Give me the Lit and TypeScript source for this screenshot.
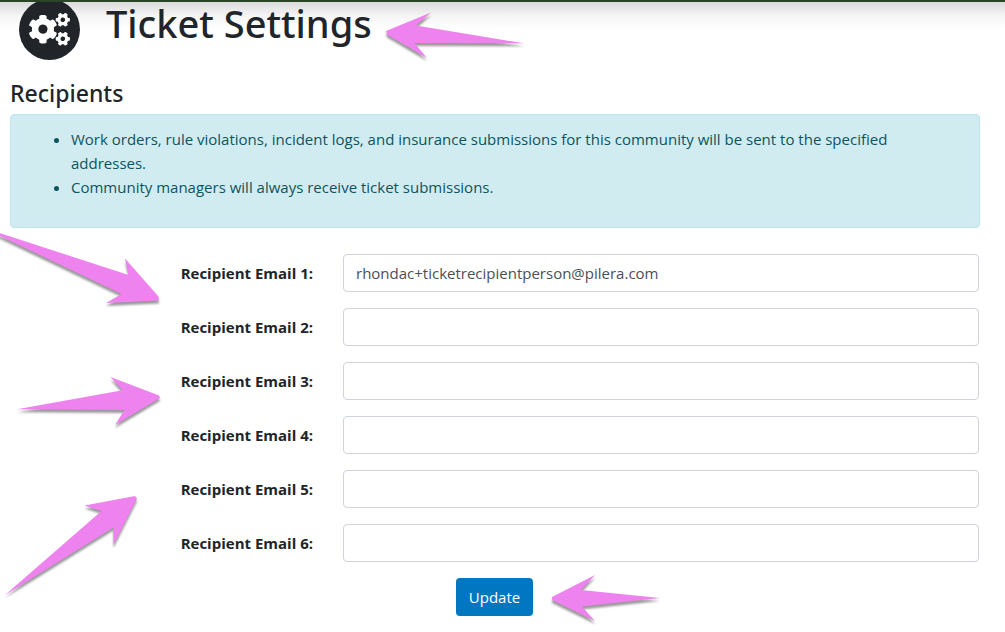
import { LitElement, html, css, svg } from "lit";
import { customElement, state } from "lit/decorators.js";

const SMALL_COG =
  "M512.1 191l-8.2 14.3c-3 5.3-9.4 7.5-15.1 5.4-11.8-4.4-22.6-10.7-32.1-18.6-4.6-3.8-5.8-10.5-2.8-15.7l8.2-14.3c-6.9-8-12.3-17.3-15.9-27.4h-16.5c-6 0-11.2-4.3-12.2-10.3-2-12-2.1-24.6 0-37.1 1-6 6.2-10.4 12.2-10.4h16.5c3.6-10.1 9-19.4 15.9-27.4l-8.2-14.3c-3-5.2-1.9-11.9 2.8-15.7 9.5-7.9 20.4-14.2 32.1-18.6 5.7-2.1 12.1.1 15.1 5.4l8.2 14.3c10.5-1.9 21.2-1.9 31.7 0L552 6.3c3-5.3 9.4-7.5 15.1-5.4 11.8 4.4 22.6 10.7 32.1 18.6 4.6 3.8 5.8 10.5 2.8 15.7l-8.2 14.3c6.9 8 12.3 17.3 15.9 27.4h16.5c6 0 11.2 4.3 12.2 10.3 2 12 2.1 24.6 0 37.1-1 6-6.2 10.4-12.2 10.4h-16.5c-3.6 10.1-9 19.4-15.9 27.4l8.2 14.3c3 5.2 1.9 11.9-2.8 15.7-9.5 7.9-20.4 14.2-32.1 18.6-5.7 2.1-12.1-.1-15.1-5.4l-8.2-14.3c-10.4 1.9-21.2 1.9-31.7 0zm-10.5-58.8c38.5 29.6 82.4-14.3 52.8-52.8-38.5-29.7-82.4 14.3-52.8 52.8z";
const LARGE_COG =
  "M386.3 286.1l33.7 16.8c10.1 5.8 14.5 18.1 10.5 29.1-8.9 24.2-26.4 46.4-42.6 65.8-7.4 8.9-20.2 11.1-30.3 5.3l-29.1-16.8c-16 13.7-34.6 24.6-54.9 31.7v33.6c0 11.6-8.3 21.6-19.7 23.6-24.6 4.2-50.4 4.4-75.9 0-11.5-2-20-11.9-20-23.6V418c-20.3-7.2-38.9-18-54.9-31.7L74 403c-10 5.8-22.9 3.6-30.3-5.3-16.2-19.4-33.3-41.6-42.2-65.7-4-10.9.4-23.2 10.5-29.1l33.3-16.8c-3.9-20.9-3.9-42.4 0-63.4L12 205.8c-10.1-5.8-14.6-18.1-10.5-29 8.9-24.2 26-46.4 42.2-65.8 7.4-8.9 20.2-11.1 30.3-5.3l29.1 16.8c16-13.7 34.6-24.6 54.9-31.7V57.1c0-11.5 8.2-21.5 19.6-23.5 24.6-4.2 50.5-4.4 76-.1 11.5 2 20 11.9 20 23.6v33.6c20.3 7.2 38.9 18 54.9 31.7l29.1-16.8c10-5.8 22.9-3.6 30.3 5.3 16.2 19.4 33.2 41.6 42.1 65.8 4 10.9.1 23.2-10 29.1l-33.7 16.8c3.9 21 3.9 42.5 0 63.5zm-117.6 21.1c59.2-77-28.7-164.9-105.7-105.7-59.2 77 28.7 164.9 105.7 105.7z";

// Callout arrows drawn over the page, as outlines in page coordinates.
const ARROWS = [
  "M386 31L431 12.5L416 25.5L524 43.3L414.5 43L427 58L387 34.5Z",
  "M-2 232.5L128.5 275L125 258.5L158.5 296.5L159 300.5L106 303L121.5 294L-2 235Z",
  "M17 409.3L122.5 390.3L110.5 377L159 395.5L160 398L115 425L124.5 410Z",
  "M5 595L101.5 511L84.5 505.5L135 496L137 498.5L113.5 545L113.5 527.5Z",
  "M552 597L595 575L581 590L660 598L582 606.5L595 621L552 600Z",
];

@customElement("app-root")
export class AppRoot extends LitElement {
  static styles = css`
    :host {
      display: block;
      position: relative;
      background: #fff;
      color: #212529;
      font: 400 16px/24px "Segoe UI", "Open Sans", "Noto Sans", sans-serif;
    }
    .topbar {
      height: 2px;
      background: #2b4529;
    }
    .page {
      padding: 0 25px 16px 10px;
      background: linear-gradient(rgba(0, 0, 0, 0.14), rgba(0, 0, 0, 0.04) 14px, transparent 27px);
    }
    .title {
      display: flex;
      align-items: flex-start;
      gap: 26px;
      padding: 0 0 19px 9px;
    }
    .badge {
      display: block;
      flex: none;
      width: 61px;
      height: 58px;
    }
    h1,
    h2 {
      font-family: "Segoe UI", "Noto Sans", "Open Sans", sans-serif;
      font-weight: 500;
    }
    h1 {
      margin: 0;
      font-size: 38px;
      line-height: 42px;
    }
    h2 {
      margin: 0 0 7px;
      font-size: 23px;
      line-height: 28px;
    }
    .notice {
      padding: 12px 20px;
      border: 1px solid #bee5eb;
      border-radius: 4px;
      background: #d1ecf1;
      color: #0c5460;
      font-size: 15px;
    }
    .notice ul {
      margin: 0 0 16px;
      padding-left: 40px;
    }
    form {
      display: flex;
      flex-direction: column;
      gap: 16px;
      margin-top: 26px;
      padding-right: 1px;
    }
    .field {
      display: grid;
      grid-template-columns: 303fr 636fr;
      gap: 30px;
      align-items: center;
    }
    label {
      text-align: right;
      font-size: 15px;
      font-weight: 700;
    }
    input {
      box-sizing: border-box;
      width: 100%;
      height: 38px;
      padding: 6px 12px;
      border: 1px solid #ced4da;
      border-radius: 4px;
      background: #fff;
      color: #495057;
      font: inherit;
      font-size: 15px;
    }
    button {
      align-self: center;
      height: 38px;
      padding: 0 13px;
      border: 0;
      border-radius: 4px;
      background: #0077c0;
      color: #fff;
      font: inherit;
      font-size: 15px;
      cursor: pointer;
    }
    .arrows {
      position: absolute;
      top: 0;
      left: 0;
      overflow: visible;
      pointer-events: none;
      fill: #ee82ee;
      filter: drop-shadow(0 3px 1px rgba(0, 0, 0, 0.4));
    }
  `;

  @state() private emails = ["rhondac+ticketrecipientperson@pilera.com", "", "", "", "", ""];

  private edit(index: number, event: Event) {
    const value = (event.target as HTMLInputElement).value;
    this.emails = this.emails.map((email, i) => (i === index ? value : email));
  }

  render() {
    return html`
      <div class="topbar"></div>
      <main class="page">
        <header class="title">
          <svg class="badge" viewBox="0 3 61 58" aria-hidden="true">
            <circle cx="30.5" cy="30.5" r="30.5" fill="#212529" />
            <g transform="translate(10.2 14) scale(.0637)" fill="#fff">
              <path d=${SMALL_COG} />
              <path d=${LARGE_COG} />
              <path d=${SMALL_COG} transform="translate(0 299)" />
            </g>
          </svg>
          <h1>Ticket Settings</h1>
        </header>
        <h2>Recipients</h2>
        <div class="notice">
          <ul>
            <li>
              Work orders, rule violations, incident logs, and insurance submissions for this
              community will be sent to the specified addresses.
            </li>
            <li>Community managers will always receive ticket submissions.</li>
          </ul>
        </div>
        <form @submit=${(e: Event) => e.preventDefault()}>
          ${this.emails.map(
            (email, i) => html`
              <div class="field">
                <label for="email-${i + 1}">Recipient Email ${i + 1}:</label>
                <input
                  id="email-${i + 1}"
                  type="text"
                  .value=${email}
                  @input=${(e: Event) => this.edit(i, e)}
                />
              </div>
            `
          )}
          <button type="submit">Update</button>
        </form>
      </main>
      <svg class="arrows" width="1" height="1" aria-hidden="true">
        ${ARROWS.map((d) => svg`<path d=${d} />`)}
      </svg>
    `;
  }
}
